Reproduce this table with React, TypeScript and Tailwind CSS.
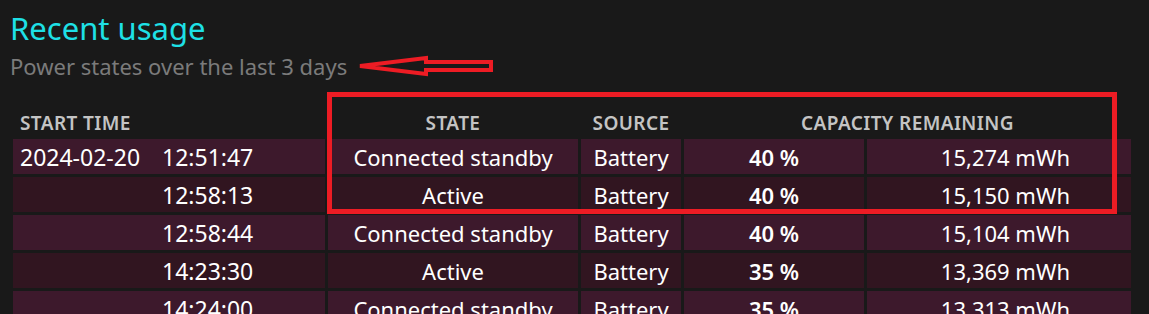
// Battery report — "Recent usage" table with red annotation overlay.

const rows = [
  { date: "2024-02-20", time: "12:51:47", state: "Connected standby", source: "Battery", pct: "40 %", mwh: "15,274 mWh" },
  { date: "", time: "12:58:13", state: "Active", source: "Battery", pct: "40 %", mwh: "15,150 mWh" },
  { date: "", time: "12:58:44", state: "Connected standby", source: "Battery", pct: "40 %", mwh: "15,104 mWh" },
  { date: "", time: "14:23:30", state: "Active", source: "Battery", pct: "35 %", mwh: "13,369 mWh" },
  { date: "", time: "14:24:00", state: "Connected standby", source: "Battery", pct: "35 %", mwh: "13,313 mWh" },
];

const head = "flex h-[33px] pt-[8px] text-[19px] leading-[24px] font-semibold tracking-[0.4px] text-[#c4c4c4]";

export default function App() {
  return (
    <div
      className="relative h-[314px] w-[1149px] overflow-hidden bg-[#191919] text-white"
      style={{ fontFamily: '"Noto Sans", "Open Sans", sans-serif' }}
    >
      {/* Heading */}
      <div className="pl-[10px] pt-[10px]">
        <h1 className="text-[31px] leading-[36px] text-[#1ee0e6]">Recent usage</h1>
        <p className="mt-[5px] text-[22px] leading-[30px] text-[#7b7b7b]">Power states over the last 3 days</p>
      </div>

      {/* Table */}
      <div className="ml-[13px] mt-[22px] grid grid-cols-[312px_250px_100px_180px_264px] gap-x-[3px] gap-y-[3px] text-[22px]">
        <div className={`${head} pl-[7px]`}>START TIME</div>
        <div className={`${head} justify-center`}>STATE</div>
        <div className={`${head} justify-center`}>SOURCE</div>
        <div className={`${head} col-span-2 justify-center`}>CAPACITY REMAINING</div>

        {rows.map((r, i) => {
          const bg = i % 2 === 0 ? "bg-[#3d192c]" : "bg-[#311520]";
          return [
            <div key={`a${i}`} className={`flex h-[35px] items-center pl-[7px] pt-[2px] text-[23px] ${bg}`}>
              <span className="inline-block w-[142px]">{r.date}</span>
              <span>{r.time}</span>
            </div>,
            <div key={`b${i}`} className={`flex h-[35px] items-center justify-center pt-[2px] ${bg}`}>{r.state}</div>,
            <div key={`c${i}`} className={`flex h-[35px] items-center justify-center pt-[2px] ${bg}`}>{r.source}</div>,
            <div key={`d${i}`} className={`flex h-[35px] items-center justify-center pt-[2px] font-semibold ${bg}`}>{r.pct}</div>,
            <div key={`e${i}`} className={`flex h-[35px] items-center justify-end pr-[61px] pt-[2px] ${bg}`}>{r.mwh}</div>,
          ];
        })}
      </div>

      {/* Annotations */}
      <div className="absolute left-[327px] top-[92px] h-[122px] w-[790px] border-[5px] border-[#ed1c24]" />
      <svg className="absolute left-[355px] top-[53px]" width="142" height="28" viewBox="0 0 142 28">
        <polygon
          points="5,13 71,5 71,9 136,9 136,17 71,17 71,21"
          fill="none"
          stroke="#ed1c24"
          strokeWidth="4"
          strokeLinejoin="miter"
        />
      </svg>
    </div>
  );
}
